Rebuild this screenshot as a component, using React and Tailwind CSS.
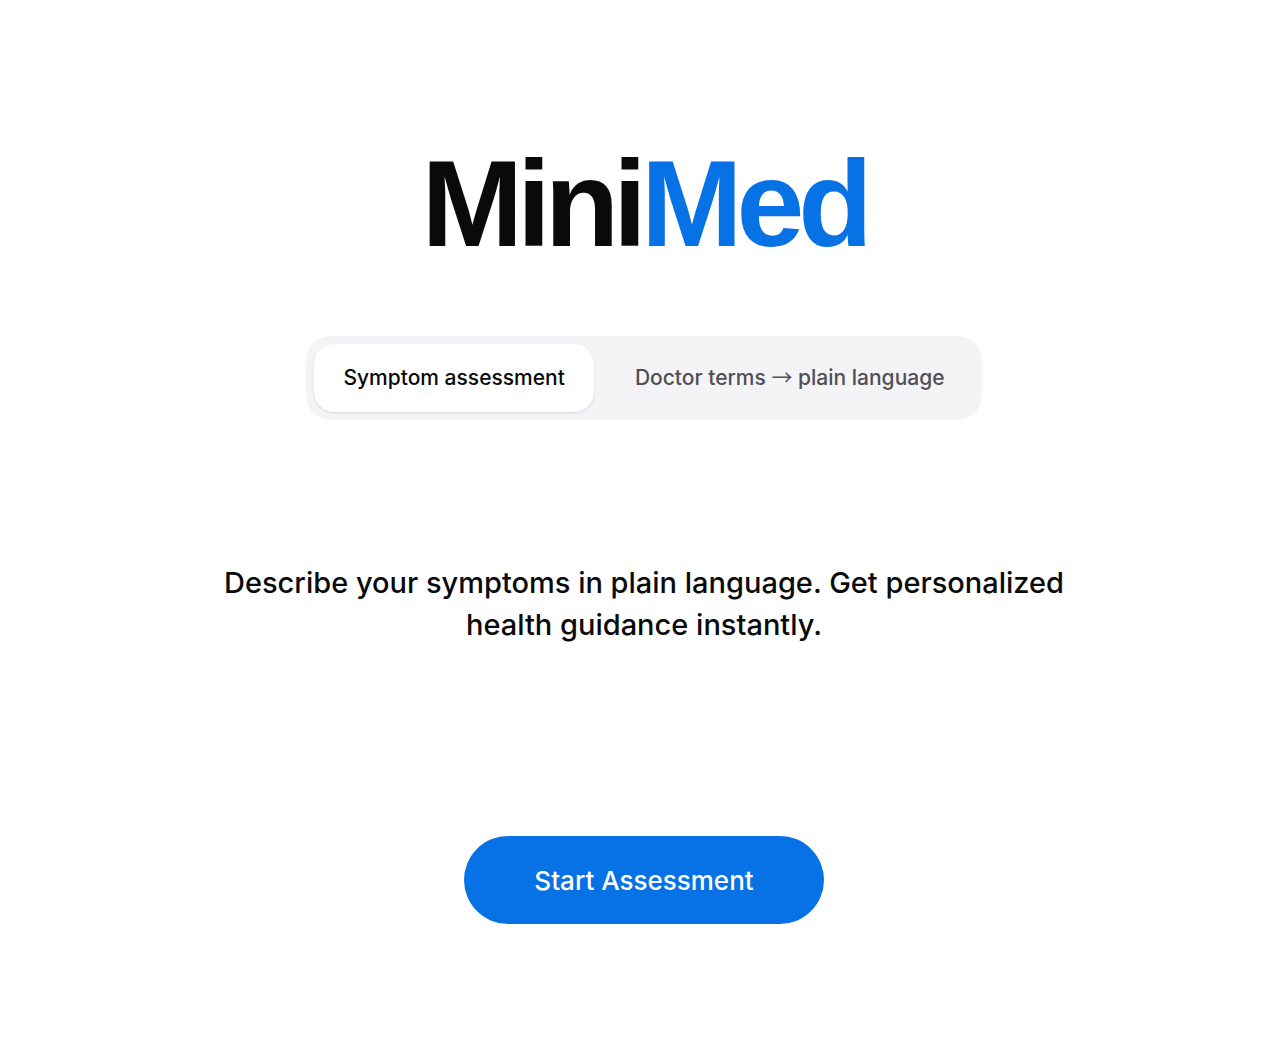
import { useState } from "react";

const tabs = [
  { id: "symptoms", label: "Symptom assessment" },
  {
    id: "terms",
    label: (
      <>
        Doctor terms{" "}
        <span className="font-['Noto_Sans_CJK_JP',sans-serif] leading-none font-normal">
          →
        </span>{" "}
        plain language
      </>
    ),
  },
];

const App = () => {
  const [activeTab, setActiveTab] = useState("symptoms");

  return (
    <main className="min-h-screen bg-white pl-8 pr-6 pt-[136px] pb-32 flex flex-col items-center text-[#0a0a0a] font-['Inter','Liberation_Sans',sans-serif]">
      <h1 className="font-['Liberation_Sans',sans-serif] text-[122px] leading-[136px] font-bold tracking-tighter">
        Mini<span className="text-[#0771e6]">Med</span>
      </h1>

      <div
        role="tablist"
        className="mt-16 flex gap-3 rounded-3xl bg-[#f4f4f6] p-2"
      >
        {tabs.map((tab) => (
          <button
            key={tab.id}
            type="button"
            role="tab"
            aria-selected={activeTab === tab.id}
            onClick={() => setActiveTab(tab.id)}
            className={`h-[68px] rounded-[20px] px-[29px] text-[21px] font-medium whitespace-nowrap ${
              activeTab === tab.id
                ? "bg-white text-[#0a0a0a] shadow"
                : "text-[#4f4f55]"
            }`}
          >
            {tab.label}
          </button>
        ))}
      </div>

      <p className="mt-[142px] max-w-[900px] text-center text-[29px] leading-[42px] font-medium">
        Describe your symptoms in plain language. Get personalized health
        guidance instantly.
      </p>

      <button
        type="button"
        className="mt-[190px] h-[88px] rounded-full bg-[#0771e6] px-[70px] text-[26px] font-medium text-white"
      >
        Start Assessment
      </button>
    </main>
  );
};

export default App;
